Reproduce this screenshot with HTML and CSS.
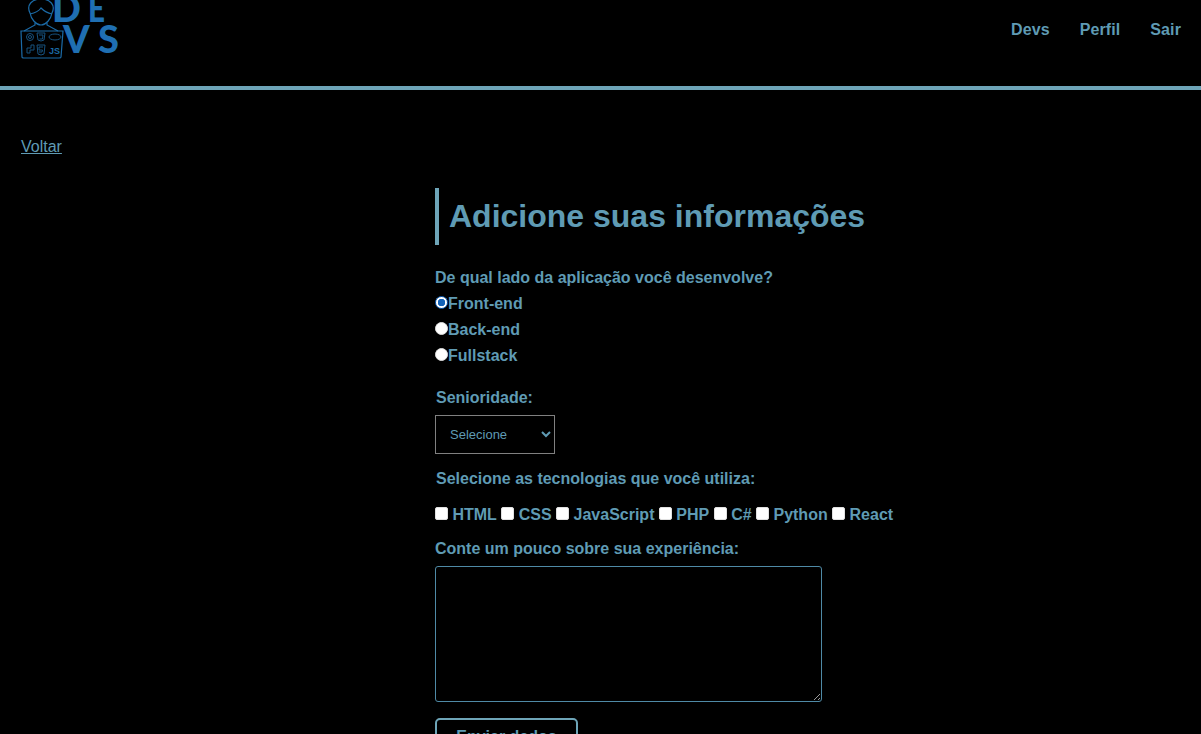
FILE: index.html
```html
<!DOCTYPE html>
<html lang="pt-BR">
<head>
    <meta charset="UTF-8">
    <meta name="viewport" content="width=device-width, initial-scale=1.0">
    <title>Adicione suas informações</title>
    <link rel="stylesheet" href="styles.css">
</head>
<body>
    <header class="topbar">
        <a class="logo" href="#">
            <svg width="100" height="60" viewBox="0 0 100 60">
                <g fill="none" stroke="#1b6aa6" stroke-width="1.200">
                    <path d="M10 13 C6 5 12 -1 21 -1 C30 -1 36 5 32 13 C31 19 26 25 21 25 C16 25 11 19 10 13 Z"/>
                    <path d="M10 14 C15 13 19 11 21 8 C24 11 27 13 32 14"/>
                    <path d="M15 23 L15 25 L4 31 M27 23 L27 25 L38 31"/>
                    <path d="M1 31 H43 L41 57 Q41 58 39 58 H4 Q2 58 2 57 Z"/>
                </g>
                <g fill="none" stroke="#17527f" stroke-width="1">
                    <circle cx="10" cy="37" r="3.500"/>
                    <circle cx="10" cy="37" r="1.500"/>
                    <path d="M17 33 h8 l-1 7 l-3 1 l-3 -1 Z"/>
                    <path d="M19 35 h4 l-.5 4 h-3"/>
                    <ellipse cx="35" cy="37" rx="6" ry="3"/>
                    <path d="M7 48 h4 v-3 h3 v5 h-4 v3 h-3 Z"/>
                    <path d="M17 45 h8 l-1 9 l-3 1 l-3 -1 Z"/>
                    <path d="M23 47 h-4 v3 h3.500 l-.5 2 h-3"/>
                </g>
                <text class="logo-js" x="29" y="54">JS</text>
                <text class="logo-letter" x="32" y="22">D</text>
                <text class="logo-letter" x="68" y="22" textLength="17" lengthAdjust="spacingAndGlyphs">E</text>
                <text class="logo-letter" x="43" y="53">V</text>
                <text class="logo-letter" x="78" y="53">S</text>
            </svg>
        </a>
        <nav class="menu">
            <a href="#">Devs</a>
            <a href="#">Perfil</a>
            <a href="#">Sair</a>
        </nav>
    </header>

    <main class="content">
        <a class="back" href="#">Voltar</a>

        <form class="info-form">
            <h1 class="title">Adicione suas informações</h1>

            <p class="question">De qual lado da aplicação você desenvolve?</p>
            <div class="radios">
                <label class="radio-row"><input type="radio" name="lado" checked>Front-end</label>
                <label class="radio-row"><input type="radio" name="lado">Back-end</label>
                <label class="radio-row"><input type="radio" name="lado">Fullstack</label>
            </div>

            <label class="field-label seniority" for="senioridade">Senioridade:</label>
            <select id="senioridade" class="select">
                <option>Selecione</option>
                <option>Júnior</option>
                <option>Pleno</option>
                <option>Sênior</option>
            </select>

            <p class="field-label techs-label">Selecione as tecnologias que você utiliza:</p>
            <div class="techs">
                <input type="checkbox" id="html"> <label for="html">HTML</label>
                <input type="checkbox" id="css"> <label for="css">CSS</label>
                <input type="checkbox" id="js"> <label for="js">JavaScript</label>
                <input type="checkbox" id="php"> <label for="php">PHP</label>
                <input type="checkbox" id="cs"> <label for="cs">C#</label>
                <input type="checkbox" id="py"> <label for="py">Python</label>
                <input type="checkbox" id="react"> <label for="react">React</label>
            </div>

            <label class="question exp-label" for="exp">Conte um pouco sobre sua experiência:</label>
            <textarea id="exp" class="textarea"></textarea>

            <button class="btn" type="button">Enviar dados</button>
        </form>
    </main>
</body>
</html>
```

FILE: styles.css
```css
* {
    box-sizing: border-box;
}

html, body {
    height: 734px;
    overflow: hidden;
}

body {
    margin: 0;
    background-color: #000;
    color: #5f9bb4;
    font-family: "Liberation Sans", Arial, sans-serif;
    font-size: 16px;
}

a {
    color: #5f9bb4;
}

.topbar {
    height: 90px;
    display: flex;
    justify-content: space-between;
    align-items: flex-start;
    padding: 0 20px;
    border-bottom: 4px solid #6ea5b8;
}

.logo {
    display: block;
    height: 60px;
}

.logo-letter {
    font-family: Lato, sans-serif;
    font-size: 38px;
    font-weight: 900;
    fill: #1f6fb2;
}

.logo-js {
    font-family: "Liberation Sans", sans-serif;
    font-size: 9px;
    font-weight: 700;
    fill: #1b6aa6;
}

.menu {
    display: flex;
    gap: 30px;
    padding-top: 21px;
}

.menu a {
    font-weight: 700;
    letter-spacing: 0.1px;
    text-decoration: none;
}

.content {
    padding: 48px 21px 0;
}

.back {
    display: inline-block;
    line-height: 18px;
}

.info-form {
    margin: 32px 0 0 414px;
}

.title {
    margin: 0 0 24px;
    height: 57px;
    line-height: 57px;
    padding-left: 10px;
    border-left: 4px solid #6ea5b8;
    font-size: 32px;
    color: #5f9bb4;
}

.question {
    display: block;
    margin: 0;
    font-weight: 700;
    line-height: 18px;
}

.radios {
    margin-top: 4px;
}

.radio-row {
    display: flex;
    align-items: center;
    height: 26px;
    font-weight: 700;
}

.radio-row input {
    appearance: none;
    margin: 0 0 4px;
    width: 13px;
    height: 13px;
    background-color: #fff;
    border: 1px solid #e0e0e0;
    border-radius: 50%;
}

.radio-row input:checked {
    border-color: #1463b8;
    background: radial-gradient(circle, #1463b8 0 3.5px, #fff 4px);
}

.field-label {
    display: block;
    margin: 0 0 0 1px;
    font-weight: 700;
    line-height: 18px;
}

.seniority {
    margin-top: 20px;
}

.select {
    display: block;
    width: 120px;
    height: 39px;
    margin-top: 8px;
    padding: 0 10px;
    background-color: #000;
    color: #5f9bb4;
    border: 1px solid #808080;
    font-family: "Liberation Sans", Arial, sans-serif;
    font-size: 13px;
}

.techs-label {
    margin-top: 16px;
}

.techs {
    display: flex;
    align-items: center;
    gap: 4.45px;
    margin-top: 18px;
    font-weight: 700;
}

.techs input {
    appearance: none;
    margin: 0 0 4px;
    width: 13px;
    height: 13px;
    background-color: #fff;
    border: 1px solid #e0e0e0;
    border-radius: 2px;
}

.exp-label {
    margin-top: 16px;
}

.textarea {
    display: block;
    width: 387px;
    height: 136px;
    margin-top: 8px;
    background-color: #000;
    color: #5f9bb4;
    border: 1px solid #4f8aa6;
    border-radius: 3px;
}

.btn {
    display: block;
    width: 143px;
    height: 38px;
    margin-top: 16px;
    background-color: #000;
    color: #5f9bb4;
    border: 2px solid #6ea5b8;
    border-radius: 5px;
    font-family: "Liberation Sans", Arial, sans-serif;
    font-size: 16px;
    font-weight: 700;
}
```
